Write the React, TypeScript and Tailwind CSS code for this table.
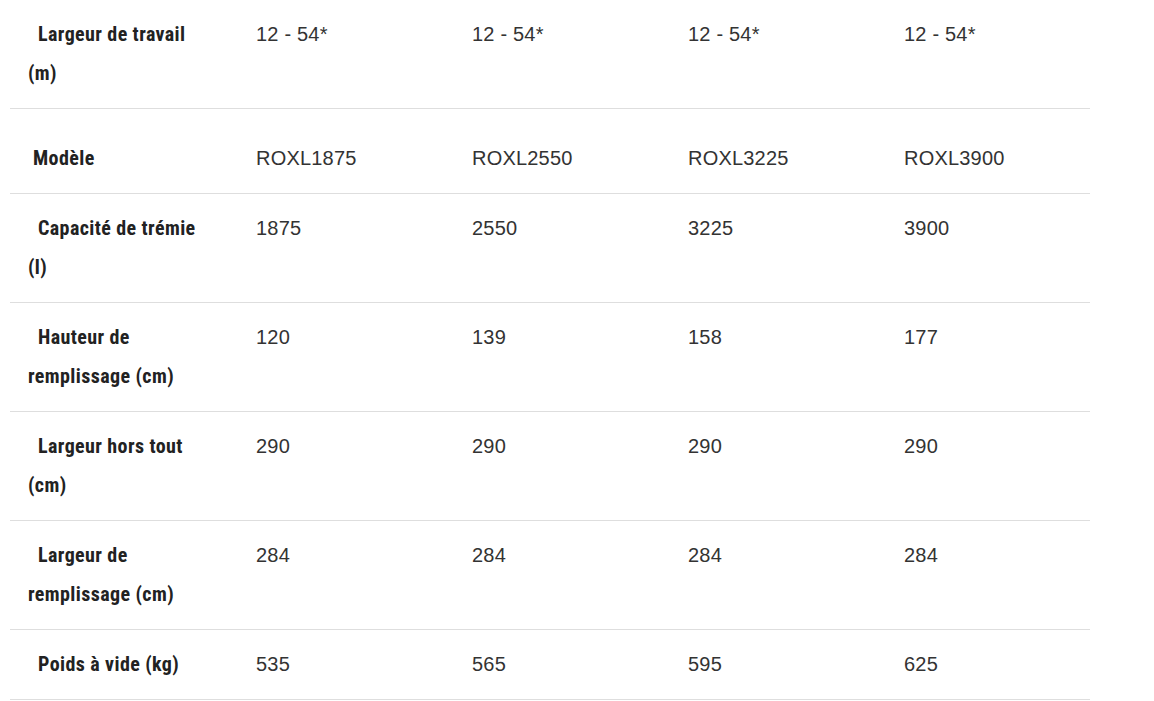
import React from "react";

type Row = { label: React.ReactNode; values: string[]; extraTop?: boolean; indent?: string };

const rows: Row[] = [
  { label: <>Largeur de travail<br />(m)</>, values: ["12 - 54*", "12 - 54*", "12 - 54*", "12 - 54*"] },
  { label: <>Modèle</>, values: ["ROXL1875", "ROXL2550", "ROXL3225", "ROXL3900"], extraTop: true, indent: "indent-[5px]" },
  { label: <>Capacité de trémie<br />(l)</>, values: ["1875", "2550", "3225", "3900"] },
  { label: <>Hauteur de<br />remplissage (cm)</>, values: ["120", "139", "158", "177"] },
  { label: <>Largeur hors tout<br />(cm)</>, values: ["290", "290", "290", "290"] },
  { label: <>Largeur de<br />remplissage (cm)</>, values: ["284", "284", "284", "284"] },
  { label: <>Poids à vide (kg)</>, values: ["535", "565", "595", "625"] },
];

export default function App() {
  return (
    <div className="w-[1154px] h-[701px] bg-white overflow-hidden">
      <div className="ml-[10px] w-[1080px]">
        {rows.map((r, i) => (
          <div
            key={i}
            className={`grid grid-cols-[228px_216px_216px_216px_204px] border-b border-[#dedede] ${r.extraTop ? "pt-[30px]" : "pt-[15px]"} pb-[15px]`}
          >
            <div
              className={`pl-[18px] ${r.indent ?? "indent-[10px]"} text-[20px] leading-[39px] font-bold text-[#222] [font-stretch:84%] tracking-[0.4px]`}
              style={{ fontFamily: '"Roboto Condensed", "Roboto", "Liberation Sans", sans-serif' }}
            >
              {r.label}
            </div>
            {r.values.map((v, j) => (
              <div
                key={j}
                className="pl-[18px] text-[20px] leading-[39px] text-[#333] tracking-[0.2px]"
                style={{ fontFamily: '"Liberation Sans", Arial, sans-serif' }}
              >
                {v}
              </div>
            ))}
          </div>
        ))}
      </div>
    </div>
  );
}
